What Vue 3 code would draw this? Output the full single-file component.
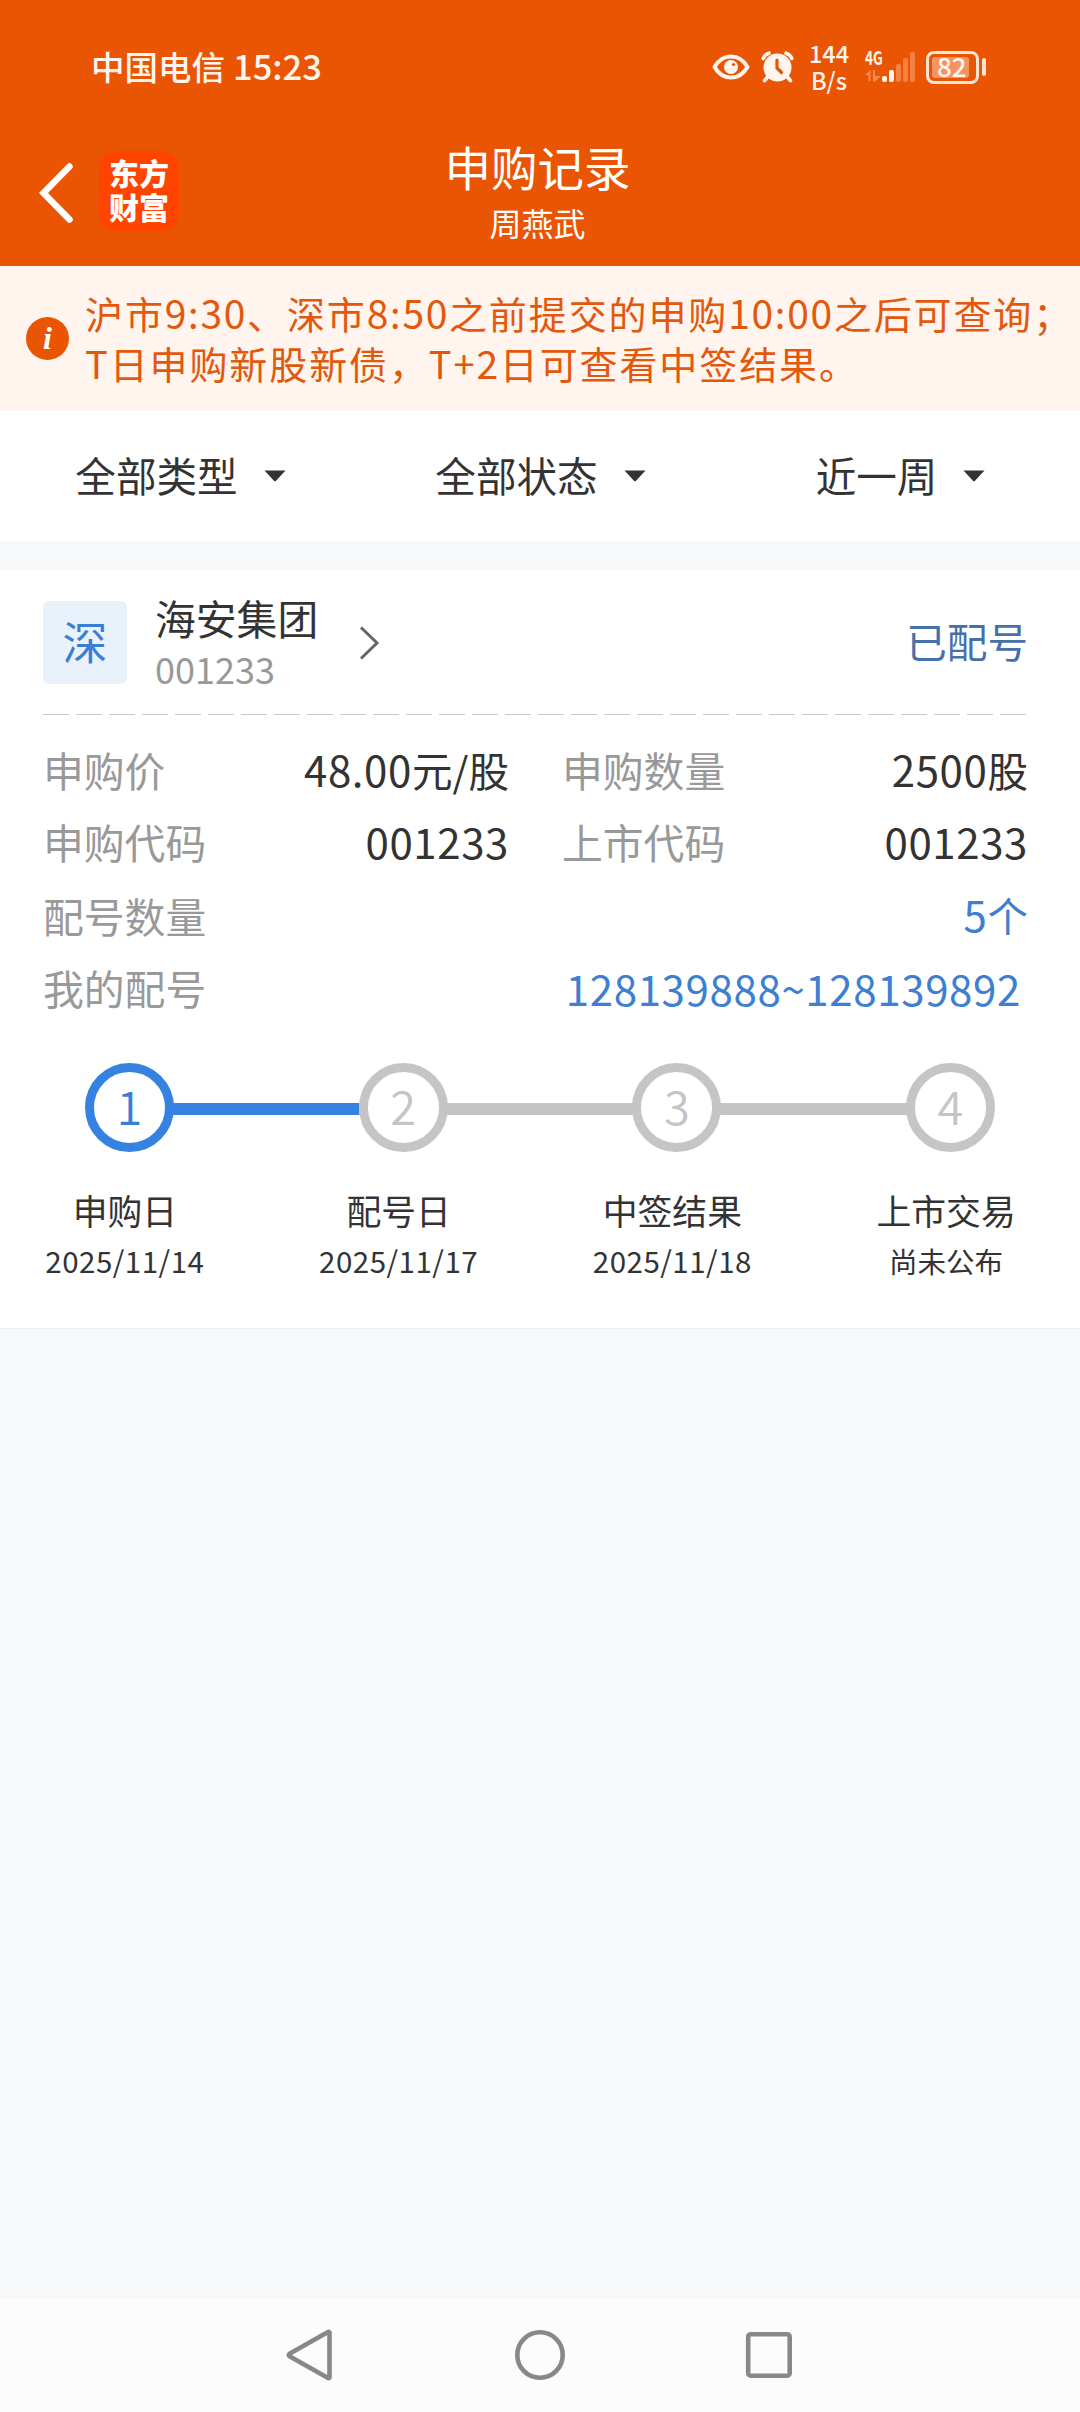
<template>
  <div class="page">
    <header class="top">
      <div class="status-bar">
        <div class="carrier">中国电信<span class="clock">15:23</span></div>
        <div class="status-icons">
          <svg class="eye" width="38" height="26" viewBox="0 0 38 26">
            <path d="M2.5 13C6.500 6 12 2.500 19 2.500S31.500 6 35.500 13C31.500 20 26 23.500 19 23.500S6.500 20 2.500 13Z" fill="none" stroke="#fff4ee" stroke-width="4" stroke-linejoin="round" />
            <circle cx="19" cy="13" r="7" fill="#fff4ee" />
            <circle cx="21.500" cy="10.500" r="1.600" fill="#ea5504" />
          </svg>
          <svg class="alarm" width="33" height="32" viewBox="0 0 33 32">
            <g fill="none" stroke="#fff4ee" stroke-width="3.600" stroke-linecap="round">
              <path d="M2.200 7.500Q3.500 3.500 8 2.200M30.800 7.500Q29.500 3.500 25 2.200" />
              <path d="M6.500 26L3.600 29.500M26.500 26L29.400 29.500" />
            </g>
            <circle cx="16.500" cy="16.500" r="14" fill="#fff4ee" />
            <path d="M16 9V17L20.500 21.500" fill="none" stroke="#ea5504" stroke-width="3.200" stroke-linecap="round" />
          </svg>
          <div class="speed"><span>144</span><span>B/s</span></div>
          <div class="signal">
            <div class="signal-left">
              <span class="net">4G</span>
              <svg width="16" height="12" viewBox="0 0 16 12">
                <path d="M0 5L5.500 0V11H3.500V5ZM8 0H10V6H16L10 11.500H8Z" fill="#f58a50" />
              </svg>
            </div>
            <i v-for="(h, i) in [6, 12, 18, 24, 30]" :key="h" class="bar" :class="{ on: i < 2 }" :style="{ height: h + 'px' }"></i>
          </div>
          <div class="battery"><div class="level">82</div></div>
          <i class="battery-cap"></i>
        </div>
      </div>

      <div class="nav-bar">
        <div class="nav-left">
          <svg width="34" height="60" viewBox="0 0 34 60">
            <path d="M30.500 3.500L4.500 30L30.500 56.500" fill="none" stroke="#fff" stroke-width="6.500" stroke-linecap="round" />
          </svg>
          <div class="logo"><span>东方</span><span>财富</span></div>
        </div>
        <div class="nav-title">
          <h1>申购记录</h1>
          <p>周燕武</p>
        </div>
      </div>
    </header>

    <section class="notice">
      <div class="info-icon">i</div>
      <div class="notice-text">
        <p v-for="line in notice" :key="line">
          <span v-for="(run, i) in runs(line)" :key="i" :class="{ num: run.num }">{{ run.text }}</span>
        </p>
      </div>
    </section>

    <section class="filters">
      <div v-for="name in filters" :key="name" class="filter">
        {{ name }}
        <svg width="22" height="12" viewBox="0 0 22 12"><path d="M0.500 0.500H21.500L11.800 11Q11 11.800 10.200 11Z" fill="#333" /></svg>
      </div>
    </section>

    <section class="card">
      <div class="card-head">
        <div class="market">深</div>
        <div class="stock">
          <h2>海安集团</h2>
          <p>001233</p>
        </div>
        <svg class="chevron" width="22" height="34" viewBox="0 0 22 34">
          <path d="M2 1.500L18 17L2 32.500" fill="none" stroke="#666" stroke-width="3" />
        </svg>
        <div class="state">已配号</div>
      </div>

      <div class="divider"></div>

      <div class="details">
        <div v-for="item in details" :key="item.label" class="detail" :class="{ wide: item.wide }">
          <span class="label">{{ item.label }}</span>
          <span class="value" :class="[{ link: item.wide }, item.cls]">
            <span v-for="(run, i) in runs(item.value)" :key="i" :class="{ num: run.num }">{{ run.text }}</span>
          </span>
        </div>
      </div>

      <div class="track">
        <template v-for="(step, i) in steps" :key="step.name">
          <div v-if="i" class="line" :class="{ active: i === 1 }"></div>
          <div class="dot" :class="{ active: i === 0 }">{{ i + 1 }}</div>
        </template>
      </div>
      <div class="step-labels">
        <div v-for="step in steps" :key="step.name" class="step">
          <strong>{{ step.name }}</strong>
          <span :class="{ date: step.date.includes('/') }">{{ step.date }}</span>
        </div>
      </div>
    </section>

    <footer class="system-nav">
      <svg width="48" height="54" viewBox="0 0 48 54">
        <path d="M43.500 4.500V49.500Q43 50.500 42 50L4 28.500Q1.500 27 4 25.500L42 4Q43 3.500 43.500 4.500Z" />
      </svg>
      <svg width="54" height="54" viewBox="0 0 54 54"><circle cx="27" cy="27" r="22.700" /></svg>
      <svg width="48" height="54" viewBox="0 0 48 54"><rect x="3.200" y="6.200" width="41.500" height="41.500" rx="2.500" /></svg>
    </footer>
  </div>
</template>

<script setup>
const notice = [
  '沪市9:30、深市8:50之前提交的申购10:00之后可查询；',
  'T日申购新股新债，T+2日可查看中签结果。',
]

const filters = ['全部类型', '全部状态', '近一周']

const details = [
  { label: '申购价', value: '48.00元/股' },
  { label: '申购数量', value: '2500股' },
  { label: '申购代码', value: '001233' },
  { label: '上市代码', value: '001233' },
  { label: '配号数量', value: '5个', wide: true, cls: 'count' },
  { label: '我的配号', value: '128139888~128139892', wide: true, cls: 'range' },
]

const steps = [
  { name: '申购日', date: '2025/11/14' },
  { name: '配号日', date: '2025/11/17' },
  { name: '中签结果', date: '2025/11/18' },
  { name: '上市交易', date: '尚未公布' },
]

// digits are set slightly larger than the Chinese text around them
function runs(text) {
  return text
    .split(/([\d.~]+)/)
    .filter(Boolean)
    .map((t) => ({ text: t, num: /[\d~]/.test(t) }))
}
</script>

<style>
body {
  margin: 0;
  background: #f6f8fa;
}
</style>

<style scoped>
.page {
  width: 1080px;
  height: 2412px;
  display: flex;
  flex-direction: column;
  background: #f6f8fa;
  color: #333;
  font-family: "Noto Sans CJK SC", sans-serif;
  font-size: 40.6px;
  overflow: hidden;
}

h1, h2, p { margin: 0; font-weight: 400; }

svg { display: block; flex-shrink: 0; }

.top {
  height: 266px;
  background: #ea5504;
  color: #fff;
}

.status-bar {
  height: 134px;
  padding: 0 94px 0 91px;
  display: flex;
  justify-content: space-between;
  align-items: center;
  box-sizing: border-box;
  color: #fff4ee;
}

.carrier {
  margin-bottom: 4px;
  font-size: 33.5px;
  font-weight: 500;
  line-height: 40px;
  white-space: nowrap;
}

.clock {
  margin-left: 8px;
  font-size: 34.5px;
}

.status-icons {
  display: flex;
  align-items: center;
}

.alarm { margin-left: 11px; }

.speed {
  width: 46px;
  margin: 0 1px 1px 12px;
  display: flex;
  flex-direction: column;
  align-items: center;
  font-size: 23.5px;
  font-weight: 500;
  line-height: 27px;
}

.signal {
  margin-left: 12px;
  display: flex;
  align-items: flex-end;
  height: 30px;
}

.signal-left {
  width: 17px;
  height: 30px;
  display: flex;
  flex-direction: column;
  justify-content: space-between;
}

.net {
  margin-top: -2px;
  font-size: 19px;
  font-weight: 700;
  line-height: 14px;
  transform: scaleX(0.72);
  transform-origin: left;
}

.bar {
  width: 4.500px;
  margin-right: 2.500px;
  border-radius: 2px;
  background: #f58244;
}

.bar.on { background: #fff4ee; }

.battery {
  width: 53px;
  height: 33px;
  margin-left: 9px;
  padding: 3px;
  border: 3px solid #ffe3d3;
  border-radius: 8px;
  box-sizing: border-box;
}

.level {
  width: 37px;
  height: 21px;
  padding-left: 5px;
  border-radius: 3px;
  box-sizing: border-box;
  background: #f7935f;
  font-size: 26px;
  font-weight: 500;
  line-height: 17px;
}

.battery-cap {
  width: 4px;
  height: 18px;
  margin-left: 3px;
  border-radius: 2px;
  background: #ffe3d3;
}

.nav-bar {
  height: 132px;
  display: grid;
  grid-template-columns: 1fr auto 1fr;
}

.nav-left {
  height: 80px;
  padding: 17px 0 0 39px;
  display: flex;
  align-items: center;
  gap: 26px;
}

.nav-left > svg { margin-top: 3px; }

.logo {
  width: 80px;
  height: 80px;
  padding-top: 4px;
  display: flex;
  flex-direction: column;
  align-items: center;
  box-sizing: border-box;
  border-radius: 17px;
  background: #ff4400;
  font-size: 30px;
  font-weight: 900;
  line-height: 34px;
}

.nav-title {
  margin-left: -5px;
  text-align: center;
}

.nav-title h1 {
  padding-top: 4px;
  font-size: 46.5px;
  line-height: 56px;
}

.nav-title p {
  margin-top: 9px;
  font-size: 32px;
  line-height: 38px;
}

.notice {
  height: 145px;
  padding: 21px 0 0 26px;
  display: flex;
  gap: 16px;
  box-sizing: border-box;
  background: #fff4ee;
  color: #e2580c;
  font-size: 38px;
  letter-spacing: 1.9px;
}

.notice p {
  line-height: 50px;
  white-space: nowrap;
}

.notice p + p { margin-top: -1px; }

.notice .num {
  font-size: 39px;
  letter-spacing: 1.6px;
}

.info-icon {
  width: 43px;
  height: 43px;
  margin-top: 30px;
  border-radius: 50%;
  background: #ea5504;
  color: #fff;
  font: italic 700 32px/42px "Liberation Serif", serif;
  letter-spacing: 0;
  text-align: center;
}

.filters {
  height: 130px;
  display: grid;
  grid-template-columns: repeat(3, 1fr);
  background: #fff;
}

.filter {
  padding: 0 0 4px 1px;
  display: flex;
  align-items: center;
  justify-content: center;
  gap: 26px;
}

.filter svg { margin-top: 3px; }

.card {
  height: 759px;
  margin-top: 29px;
  padding: 0 51px 0 43px;
  border-bottom: 1px solid #eceeef;
  box-sizing: border-box;
  background: #fff;
}

.card-head {
  height: 144px;
  display: flex;
  align-items: center;
}

.market {
  width: 84px;
  height: 83px;
  margin-top: 1px;
  border-radius: 6px;
  background: #e9f2fb;
  color: #3a7fd5;
  font-size: 45px;
  line-height: 79px;
  text-align: center;
}

.stock { margin: 1px 0 0 28px; }

.stock h2 {
  font-size: 40.8px;
  line-height: 52px;
}

.stock p {
  margin-top: -1px;
  color: #999;
  font-size: 36px;
  line-height: 50px;
}

.chevron { margin: 2px 0 0 41px; }

.state {
  margin: 0 1px 2px auto;
  color: #4670a8;
  line-height: 50px;
}

.divider {
  height: 1px;
  margin-right: -1px;
  background: repeating-linear-gradient(90deg, #c8c8c8 0 26px, #fff 26px 33px);
}

.details {
  margin-top: 19px;
  display: grid;
  grid-template-columns: 467px 467px;
  grid-template-rows: 72px 72px 76px 68px;
  column-gap: 52px;
}

.detail {
  display: flex;
  align-items: center;
  justify-content: space-between;
  line-height: 60px;
}

.detail.wide { grid-column: 1 / 3; }

.label {
  color: #999;
  font-size: 40.8px;
}

.value {
  margin: 0 1px 2px 0;
}

.value .num {
  font-size: 42px;
  letter-spacing: 0.6px;
}

.link { color: #3d7fd0; }

.count { margin-bottom: 4px; }

.range { margin: 0 8px 0 0; }

.value.range .num { letter-spacing: 0.65px; }

.track {
  margin: 41px 34px 0 42px;
  display: flex;
  align-items: center;
}

.dot {
  width: 89px;
  height: 89px;
  flex-shrink: 0;
  border: 9px solid #c5c5c5;
  border-radius: 50%;
  box-sizing: border-box;
  color: #c5c5c5;
  font-size: 47px;
  font-weight: 350;
  line-height: 66px;
  text-align: center;
}

.line {
  flex: 1;
  height: 12px;
  margin: 3px -3px 0;
  background: #c5c5c5;
}

.dot.active {
  border-color: #3682e1;
  color: #3a7fd5;
}

/* stops at the outer edge of the next ring */
.line.active {
  background: linear-gradient(90deg, #3682e1 calc(100% - 3px), #c5c5c5 0);
}

.step-labels {
  margin: 37px -54px 0 -55px;
  display: grid;
  grid-template-columns: repeat(4, 1fr);
}

.step {
  display: flex;
  flex-direction: column;
  align-items: center;
  font-size: 28.5px;
}

.step strong {
  font-size: 34.8px;
  font-weight: 400;
  line-height: 42px;
}

.step span {
  margin-top: 10px;
  line-height: 40px;
}

.step .date {
  margin-top: 9px;
  font-size: 29.5px;
  letter-spacing: 0.5px;
}

.system-nav {
  height: 114px;
  margin-top: auto;
  padding: 0 287px 0 286px;
  display: flex;
  align-items: center;
  justify-content: space-between;
  box-sizing: border-box;
  background: #fcfcfc;
}

.system-nav svg {
  fill: none;
  stroke: #888;
  stroke-width: 4.600;
}
</style>
